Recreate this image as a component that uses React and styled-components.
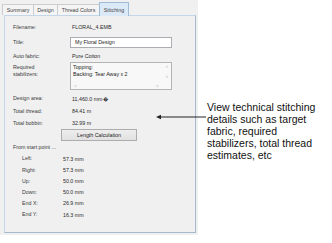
import React from "react";
import styled, { createGlobalStyle } from "styled-components";

const GlobalStyle = createGlobalStyle`
  html, body {
    margin: 0;
    padding: 0;
    background: #ffffff;
  }
  body {
    font-family: "Liberation Sans", Arial, sans-serif;
  }
`;

const Page = styled.div`
  position: relative;
  display: flex;
  width: 332px;
  height: 243px;
`;

const Panel = styled.div`
  width: 198px;
  height: 235px;
  background: #f0f0f0;
  display: flex;
  flex-direction: column;
  font-size: 5.3px;
  color: #3a3a3a;
`;

const TabStrip = styled.div`
  height: 15px;
  display: flex;
  align-items: flex-end;
  padding-left: 2px;
`;

const Tab = styled.div`
  width: ${(p) => p.$w}px;
  height: ${(p) => (p.$active ? 14 : 11)}px;
  box-sizing: border-box;
  display: flex;
  align-items: center;
  justify-content: center;
  border: 1px solid ${(p) => (p.$active ? "#9fbcd9" : "#cdcdcd")};
  border-bottom: none;
  background: ${(p) => (p.$active ? "#dce9f6" : "#f4f4f4")};
  margin-right: -1px;
  margin-bottom: ${(p) => (p.$active ? -1 : 0)}px;
  color: #444;
  z-index: ${(p) => (p.$active ? 1 : 0)};
`;

const Frame = styled.div`
  margin: 0 2px 0 4px;
  height: 218px;
  box-sizing: border-box;
  border: 1px solid #a6b8cb;
  border-top-color: #c3d6ea;
  border-left-color: #c3d6ea;
  padding: 5px 0 0 8px;
`;

const Row = styled.div`
  display: flex;
  align-items: ${(p) => (p.$top ? "flex-start" : "center")};
  height: ${(p) => p.$h}px;
  padding-left: ${(p) => (p.$indent ? 9 : 0)}px;
`;

const Label = styled.div`
  width: ${(p) => p.$w || 57}px;
  flex-shrink: 0;
  line-height: 6.5px;
  padding-top: ${(p) => p.$pt || 0}px;
`;

const Value = styled.div`
  padding-left: ${(p) => (p.$flush ? 0 : 2)}px;
  color: #2a2a2a;
`;

const TextInput = styled.div`
  width: 102px;
  height: 11px;
  box-sizing: border-box;
  border: 1px solid #abadb3;
  background: #ffffff;
  padding-left: 4px;
  display: flex;
  align-items: center;
  color: #222;
`;

const StabBox = styled.div`
  width: 102px;
  height: 28px;
  margin-top: 1px;
  box-sizing: border-box;
  border: 1px solid #b4b4b4;
  background: #f8f8f8;
  display: grid;
  grid-template-columns: 1fr 8px;
  grid-template-rows: 1fr 7px;
`;

const StabText = styled.div`
  padding: 1px 0 0 2px;
  line-height: 7px;
  color: #222;
`;

const VScroll = styled.div`
  display: flex;
  flex-direction: column;
  align-items: center;
  justify-content: space-between;
  padding: 1px 0 2px;
  color: #bdbdbd;
  font-size: 5px;
  line-height: 6px;
`;

const HScroll = styled.div`
  display: flex;
  align-items: center;
  justify-content: space-between;
  padding: 0 4px 0 3px;
  color: #bdbdbd;
  font-size: 5.5px;
`;

const Button = styled.div`
  width: 76px;
  height: 12px;
  margin-left: 48px;
  box-sizing: border-box;
  border: 1px solid #adadad;
  background: linear-gradient(#eeeeee, #e1e1e1);
  display: flex;
  align-items: center;
  justify-content: center;
  color: #222;
`;

const Callout = styled.div`
  margin-left: 9px;
  padding-top: 101px;
  font-size: 10.5px;
  line-height: 12px;
  color: #111;
  white-space: nowrap;
`;

const Arrow = styled.svg`
  position: absolute;
  left: 156px;
  top: 114px;
`;

const tabs = [
  { name: "Summary", w: 32 },
  { name: "Design", w: 25 },
  { name: "Thread Colors", w: 43 },
  { name: "Stitching", w: 30, active: true },
];

const startPoint = [
  ["Left:", "57.3 mm"],
  ["Right:", "57.3 mm"],
  ["Up:", "50.0 mm"],
  ["Down:", "50.0 mm"],
  ["End X:", "26.9 mm"],
  ["End Y:", "16.3 mm"],
];

export default function App() {
  return (
    <Page>
      <GlobalStyle />
      <Panel>
        <TabStrip>
          {tabs.map((t) => (
            <Tab key={t.name} $w={t.w} $active={t.active}>
              {t.name}
            </Tab>
          ))}
        </TabStrip>
        <Frame>
          <Row $h={12}>
            <Label>Filename:</Label>
            <Value>FLORAL_4.EMB</Value>
          </Row>
          <Row $h={18}>
            <Label>Title:</Label>
            <TextInput>My Floral Design</TextInput>
          </Row>
          <Row $h={10}>
            <Label>Auto fabric:</Label>
            <Value>Pure Cotton</Value>
          </Row>
          <Row $h={31} $top>
            <Label $pt={3}>
              Required
              <br />
              stabilizers:
            </Label>
            <StabBox>
              <StabText>
                Topping:
                <br />
                Backing: Tear Away x 2
              </StabText>
              <VScroll>
                <span>˄</span>
                <span>˅</span>
              </VScroll>
              <HScroll>
                <span>&lt;</span>
                <span>&gt;</span>
              </HScroll>
              <div />
            </StabBox>
          </Row>
          <Row $h={13}>
            <Label>Design area:</Label>
            <Value>11,460.0 mm�</Value>
          </Row>
          <Row $h={12}>
            <Label>Total thread:</Label>
            <Value>84.41 m</Value>
          </Row>
          <Row $h={12}>
            <Label>Total bobbin:</Label>
            <Value>32.99 m</Value>
          </Row>
          <Row $h={12}>
            <Button>Length Calculation</Button>
          </Row>
          <Row $h={12}>
            <Label $w={80}>From start point ...</Label>
          </Row>
          {startPoint.map(([k, v]) => (
            <Row key={k} $h={11.2} $indent>
              <Label $w={41}>{k}</Label>
              <Value $flush>{v}</Value>
            </Row>
          ))}
        </Frame>
      </Panel>
      <Callout>
        View technical stitching
        <br />
        details such as target
        <br />
        fabric, required
        <br />
        stabilizers, total thread
        <br />
        estimates, etc
      </Callout>
      <Arrow width="52" height="6" viewBox="0 0 52 6">
        <line x1="3" y1="3" x2="50" y2="3" stroke="#222" strokeWidth="1" />
        <polygon points="0,3 5,0.8 5,5.2" fill="#222" />
      </Arrow>
    </Page>
  );
}
